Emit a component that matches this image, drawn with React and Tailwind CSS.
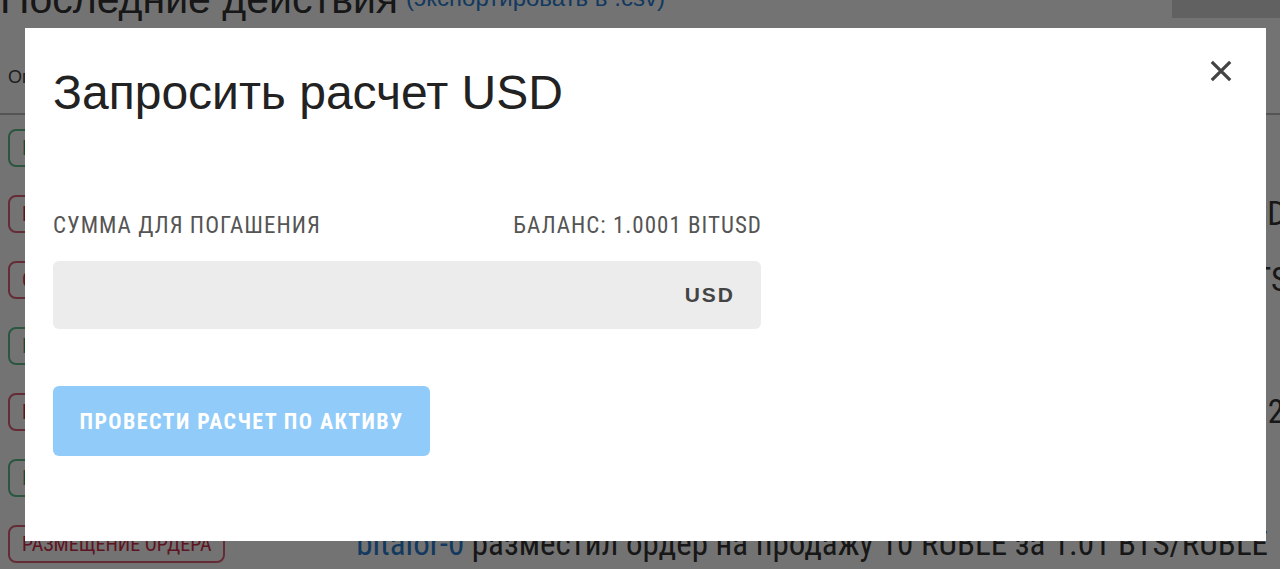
import { useState } from "react";

const rows = [
  { kind: "green", label: "ИЗМЕНЕНИЕ ОРДЕРА", text: "погасил 1 USD по цене 1.0001", end: "mr-[40px]" },
  { kind: "red", label: "РАЗМЕЩЕНИЕ ОРДЕРА", text: "разместил ордер на продажу 5 RUBLE за 1.02 BITUSD", end: "-mr-[6px]" },
  { kind: "red", label: "ОТМЕНА ОРДЕРА", text: "отменил ордер на покупку 10 RUBLE за 1.01 BTS", end: "-mr-[8px]" },
  { kind: "green", label: "ИСПОЛНЕНИЕ ОРДЕРА", text: "купил 10 RUBLE за 1.01 BTS/RUBLE", end: "mr-[40px]" },
  { kind: "red", label: "РАЗМЕЩЕНИЕ ОРДЕРА", text: "разместил ордер на продажу 12", end: "-mr-[4px]" },
  { kind: "green", label: "ИСПОЛНЕНИЕ ОРДЕРА", text: "купил 5 RUBLE за 1.02 BTS/RUBLE", end: "mr-[40px]" },
  { kind: "red", label: "РАЗМЕЩЕНИЕ ОРДЕРА", text: "разместил ордер на продажу 10 RUBLE за 1.01 BTS/RUBLE", end: "mr-[12px]" },
];

const condensed = "font-['Roboto_Condensed','DejaVu_Sans_Condensed',sans-serif]";

const App = () => {
  const [amount, setAmount] = useState("");

  return (
    <div className="relative h-[569px] w-[1280px] overflow-hidden bg-white font-['Liberation_Sans',Arial,sans-serif]">
      {/* Page behind the modal */}
      <div className="flex flex-col">
        <div className="-mt-[24px] flex items-end gap-2">
          <h2 className="text-[41px] leading-[46px] text-[#333]">Последние действия</h2>
          <span className="pb-[6px] text-[24px] text-[#2a7fd4]">(экспортировать в .csv)</span>
          <div className="ml-auto h-[42px] w-[108px] self-start bg-[#d8d8d8]" />
        </div>
        <div className="flex h-[93px] items-center border-b-2 border-[#bbb] px-2 pt-5 text-[18px] text-[#444]">
          Операция
        </div>
        <div className="flex flex-col">
          {rows.map((r, i) => (
            <div key={i} className="flex h-[66px] items-center">
              <span
                className={`ml-2 flex h-[38px] items-center rounded-lg border-2 px-3 text-[20px] ${condensed} ${
                  r.kind === "green" ? "border-[#5fbf8f] text-[#3fa070]" : "border-[#e0607a] text-[#d0304a]"
                }`}
              >
                {r.label}
              </span>
              <span className={`ml-auto whitespace-nowrap text-[33px] text-[#333] ${condensed} ${r.end}`}>
                <span className="text-[#2a7fd4]">bitalor-0</span> {r.text}
              </span>
            </div>
          ))}
        </div>
      </div>

      {/* Overlay */}
      <div className="absolute inset-0 bg-black/55 pl-[25px] pt-[28px]">
        <div className="relative flex h-[513px] w-[1241px] flex-col bg-white pl-[28px]">
          <button className="absolute right-[32px] top-[30px] text-[#444]">
            <svg width="26" height="26" viewBox="0 0 24 24" fill="none" stroke="currentColor" strokeWidth="3" strokeLinecap="butt">
              <path d="M3.5 3.5 L20.5 20.5 M20.5 3.5 L3.5 20.5" />
            </svg>
          </button>

          <h3 className="mt-[37px] text-[48px] leading-[56px] text-[#222]">Запросить расчет USD</h3>

          <div className="mt-[93px] flex w-[708px] flex-col">
            <div className={`flex items-center justify-between text-[23px] leading-[24px] tracking-[1px] text-[#555] ${condensed}`}>
              <span>СУММА ДЛЯ ПОГАШЕНИЯ</span>
              <span className="-mr-[1px]">БАЛАНС: 1.0001 BITUSD</span>
            </div>
            <div className="mt-[23px] flex h-[68px] items-center rounded-md bg-[#ececec] pl-4 pr-[26px]">
              <input
                value={amount}
                onChange={(e) => setAmount(e.target.value)}
                className="h-full flex-1 bg-transparent text-[20px] text-[#333] outline-none"
              />
              <span className="text-[21px] font-bold tracking-[2px] text-[#444]">USD</span>
            </div>
          </div>

          <button
            className={`mt-[57px] flex h-[70px] w-[377px] items-center justify-center rounded-md bg-[#90cbf9] text-[22px] font-bold tracking-[1.4px] text-white ${condensed}`}
          >
            ПРОВЕСТИ РАСЧЕТ ПО АКТИВУ
          </button>
        </div>
      </div>
    </div>
  );
};

export default App;
